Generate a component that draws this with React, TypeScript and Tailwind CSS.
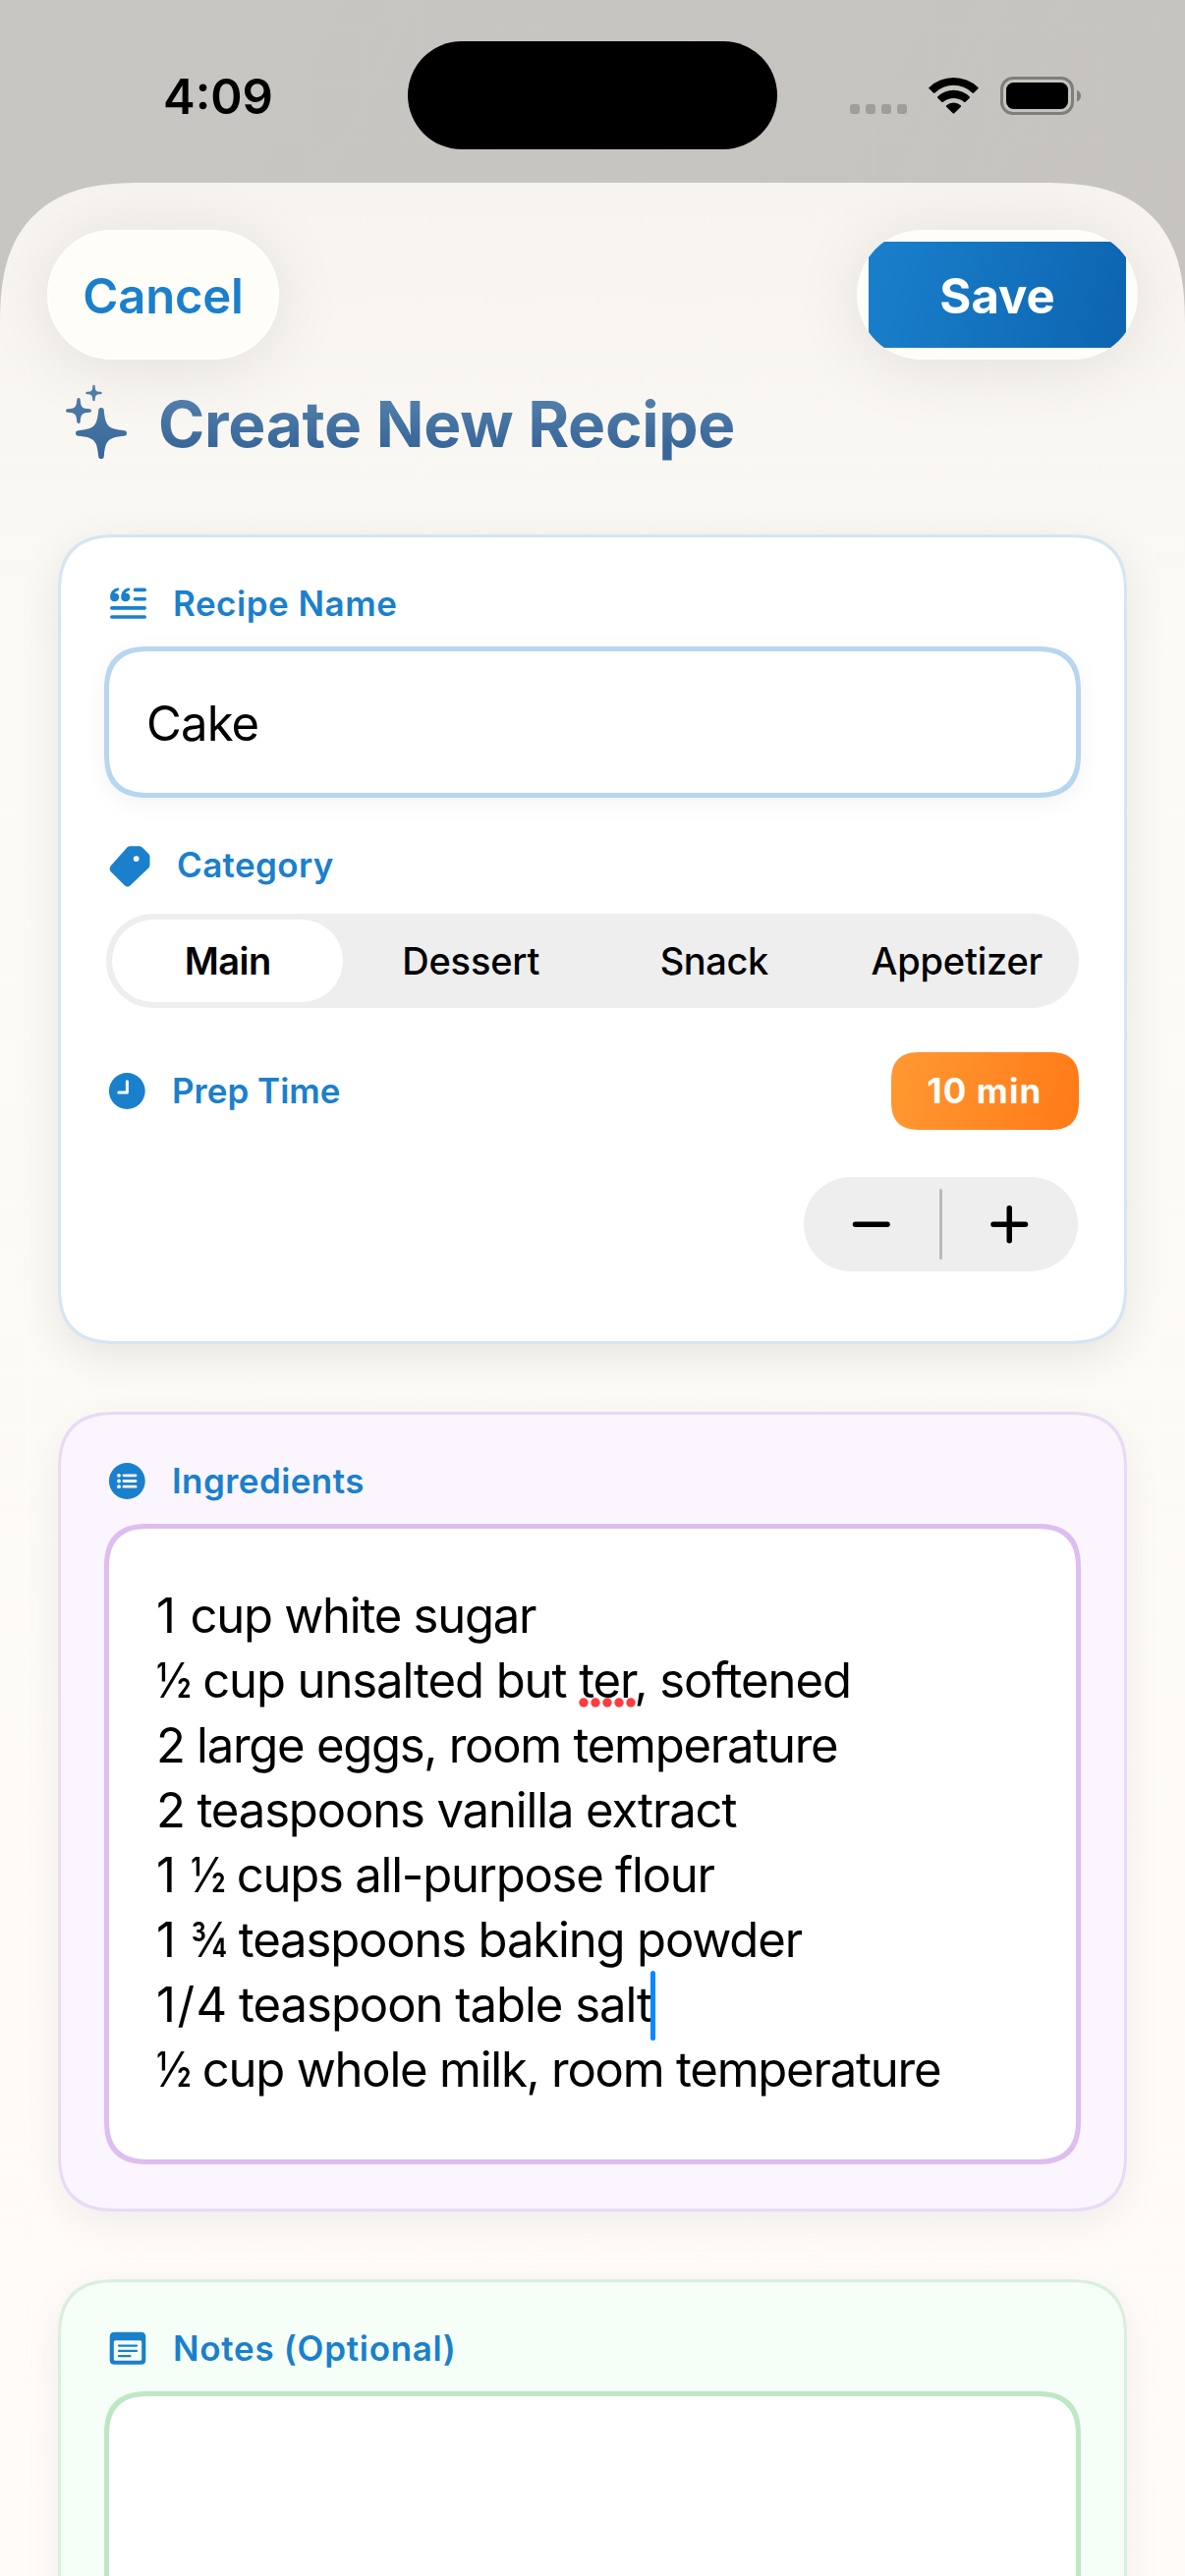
import type { ReactNode } from "react";

/* Four-pointed star with rounded tips */
function starPath(cx: number, cy: number, r: number, t: number) {
  const a = r * 0.17;
  const b = r * 0.27;
  const e = r - t;
  return [
    `M${cx - t} ${cy - e}`,
    `A${t} ${t} 0 0 1 ${cx + t} ${cy - e}`,
    `C${cx + a} ${cy - b} ${cx + b} ${cy - a} ${cx + e} ${cy - t}`,
    `A${t} ${t} 0 0 1 ${cx + e} ${cy + t}`,
    `C${cx + b} ${cy + a} ${cx + a} ${cy + b} ${cx + t} ${cy + e}`,
    `A${t} ${t} 0 0 1 ${cx - t} ${cy + e}`,
    `C${cx - a} ${cy + b} ${cx - b} ${cy + a} ${cx - e} ${cy + t}`,
    `A${t} ${t} 0 0 1 ${cx - e} ${cy - t}`,
    `C${cx - b} ${cy - a} ${cx - a} ${cy - b} ${cx - t} ${cy - e}Z`,
  ].join("");
}

function SparklesIcon() {
  return (
    <svg width="90" height="90" viewBox="0 0 90 90" className="shrink-0">
      <defs>
        <linearGradient id="sparkle" x1="0" y1="7" x2="0" y2="82" gradientUnits="userSpaceOnUse">
          <stop offset="0" stopColor="#5380aa" />
          <stop offset="1" stopColor="#376699" />
        </linearGradient>
      </defs>
      <g fill="url(#sparkle)">
        <path d={starPath(43, 56, 26, 2.8)} />
        <path d={starPath(20, 33, 13, 1.7)} />
        <path d={starPath(35.5, 15, 8.2, 1.2)} />
      </g>
    </svg>
  );
}

function QuoteIcon() {
  return (
    <svg width="52" height="43" viewBox="0 0 52 43" className="shrink-0" fill="#1a80cc">
      <path d="M4.1 15c0-5.200 3-8.900 7.700-9.500 1.700-.2 2.200 1.900.6 2.400-2.300.8-3.700 1.900-4.100 3 3.300-.4 5 1.600 5 3.900 0 2.600-2 4.500-4.600 4.500-2.700 0-4.600-1.800-4.600-4.300z" />
      <path d="M15.200 15c0-5.200 3-8.900 7.700-9.500 1.700-.2 2.200 1.900.6 2.400-2.300.8-3.700 1.900-4.100 3 3.300-.4 5 1.600 5 3.900 0 2.600-2 4.500-4.600 4.500-2.700 0-4.600-1.800-4.600-4.300z" />
      <rect x="27.700" y="5.600" width="13.300" height="3.600" rx="1.800" />
      <rect x="27.700" y="14.900" width="13.300" height="3.600" rx="1.800" />
      <rect x="4" y="24.100" width="37" height="3.600" rx="1.800" />
      <rect x="4" y="33.200" width="37" height="3.600" rx="1.800" />
    </svg>
  );
}

function TagIcon() {
  return (
    <svg width="52" height="48" viewBox="0 0 52 48" className="shrink-0" fill="#1a80cc">
      <path
        fillRule="evenodd"
        d="M21.400 4.400Q22.800 3.300 24.600 3.300H33.600Q35.400 3.300 36.700 4.600L43.200 11.100Q44.500 12.400 44.500 14.200V22.300Q44.500 24.100 43.200 25.500L24.600 43.200Q21.700 45.600 18.900 43.200L4.800 29.200Q2.400 26.500 4.800 23.200ZM30.700 13.200a2.900 2.900 0 1 0 0 5.800 2.900 2.900 0 0 0 0-5.800Z"
      />
    </svg>
  );
}

function ClockIcon() {
  return (
    <svg width="52" height="43" viewBox="0 0 52 43" className="shrink-0">
      <circle cx="21.300" cy="21.500" r="18.400" fill="#1a80cc" />
      <path d="M21.400 11.700V22.900H12.800" fill="none" stroke="#fff" strokeWidth="3" strokeLinecap="round" strokeLinejoin="round" />
    </svg>
  );
}

function ListIcon() {
  return (
    <svg width="52" height="43" viewBox="0 0 52 43" className="shrink-0">
      <circle cx="21.300" cy="21.500" r="18.400" fill="#1a80cc" />
      <g fill="#faf5ff">
        {[15.8, 21.5, 27.2].map((y) => (
          <g key={y}>
            <circle cx="13" cy={y} r="1.900" />
            <rect x="16.600" y={y - 1.4} width="14.800" height="2.800" rx="1.400" />
          </g>
        ))}
      </g>
    </svg>
  );
}

function NoteIcon() {
  return (
    <svg width="52" height="43" viewBox="0 0 52 43" className="shrink-0">
      <path
        fill="#1a80cc"
        fillRule="evenodd"
        d="M8.600 4.700H35.400Q40.300 4.700 40.300 9.600V32.900Q40.300 37.800 35.400 37.800H8.600Q3.700 37.800 3.700 32.900V9.600Q3.700 4.700 8.600 4.700ZM9.400 13.300Q7.800 13.300 7.800 14.900V32.200Q7.800 33.800 9.400 33.800H34.600Q36.200 33.800 36.200 32.200V14.900Q36.200 13.300 34.600 13.300Z"
      />
      <path d="M13 18.600H31M13 23.900H31M13 29.100H24.500" stroke="#1a80cc" strokeWidth="2.300" strokeLinecap="round" />
    </svg>
  );
}

function StatusBar() {
  return (
    <div className="flex h-[186px] items-start">
      <div className="w-[415px] pt-[69px] pl-[166px] text-[49px] leading-[60px] font-semibold text-black">4:09</div>
      <div className="mt-[42px] h-[110px] w-[376px] rounded-full bg-black" />
      <div className="mt-[78px] flex h-[39px] items-end pl-[74px]">
        <div className="mb-px flex gap-[6px]">
          {[0, 1, 2, 3].map((i) => (
            <span key={i} className="h-[10px] w-[10px] rounded-[3px] bg-[#9f9e9a]" />
          ))}
        </div>
        <svg width="51" height="38" viewBox="0 0 51 38" className="mb-px ml-[22px]" fill="#000">
          <path d="M.6 10.900Q-.3 11.300.6 12.300L4.900 16.500Q5.600 17.200 6.500 16.400A27.500 27.500 0 0 1 44.500 16.400Q45.400 17.200 46.100 16.500L50.400 12.300Q51 11.500 50.400 10.900A36 36 0 0 0 .6 10.900Z" />
          <path d="M9.200 20.400Q8.600 21.100 9.200 21.700L13.400 25.700Q14.200 26.400 15 25.700A17 17 0 0 1 36 25.700Q36.800 26.400 37.600 25.700L41.800 21.700Q42.400 21.100 41.800 20.400A23 23 0 0 0 9.200 20.400Z" />
          <path d="M18.200 29.200Q17.500 30 18.200 30.700L24.700 37.200Q25.500 38 26.300 37.200L32.800 30.700Q33.500 30 32.800 29.200A11 11 0 0 0 18.200 29.200Z" />
        </svg>
        <svg width="83" height="39" viewBox="0 0 83 39" className="ml-[22px]">
          <rect x="1.500" y="1.500" width="72" height="36" rx="11.500" fill="none" stroke="#7f7e7b" strokeWidth="3" />
          <rect x="6" y="6" width="63" height="27" rx="7.500" fill="#000" />
          <path d="M78 13.500Q82 15.500 82 19.500T78 25.500Z" fill="#7f7e7b" />
        </svg>
      </div>
    </div>
  );
}

function NavButtons() {
  return (
    <div className="flex justify-between px-12 pt-12">
      <button className="h-[132px] w-[236px] rounded-full border-2 border-white bg-[#fffdf8] pt-[3px] text-[49px] leading-[60px] font-[560] tracking-[-0.2px] text-[#1a80cc] shadow-[0_8px_72px_rgba(0,0,0,0.09)]">
        Cancel
      </button>
      <button className="flex h-[132px] w-[286px] items-center justify-center overflow-hidden rounded-full bg-[#fffdf8] shadow-[0_8px_72px_rgba(0,0,0,0.09)]">
        <span className="flex h-[108px] w-[262px] items-center justify-center bg-linear-[105deg] from-[#1a80cc] to-[#0d64b0] pt-[3px] text-[49px] leading-[60px] font-[660] text-white">
          Save
        </span>
      </button>
    </div>
  );
}

function Label({ icon, children, className }: { icon: ReactNode; children: ReactNode; className: string }) {
  return (
    <div className="flex items-center">
      {icon}
      <span className={`text-[35px] leading-[43px] font-semibold text-[#1a80cc] ${className}`}>{children}</span>
    </div>
  );
}

const card =
  "mx-[59px] rounded-[60px] [corner-shape:superellipse(1.38)] border-[3px] px-[46px] pt-[46px]";
const field = "mx-[-2px] border-[5px] bg-white rounded-[46px] [corner-shape:superellipse(1.38)]";

const categories = [
  { name: "Main", style: "font-semibold tracking-[-0.5px] bg-white" },
  { name: "Dessert", style: "font-medium tracking-[-0.15px]" },
  { name: "Snack", style: "font-medium tracking-[-0.4px]" },
  { name: "Appetizer", style: "font-medium tracking-[-0.2px] pr-px" },
];

function DetailsCard() {
  return (
    <section className={`${card} h-[824px] border-[#d5e5f2] bg-white shadow-[0_12px_44px_rgba(0,0,0,0.09)]`}>
      <Label icon={<QuoteIcon />} className="ml-[16px] tracking-[0.5px]">Recipe Name</Label>
      <div className={`${field} mt-[22px] flex h-[154px] items-center border-[#b7d6ef] pl-[38px] shadow-[0_6px_24px_rgba(0,0,0,0.05)]`}>
        <span className="mt-[3px] text-[49px] leading-[60px] tracking-[-0.83px]">Cake</span>
      </div>

      <div className="mt-[46px] h-12">
        <Label icon={<TagIcon />} className="-mt-[3px] ml-[20px] tracking-[0.35px]">Category</Label>
      </div>
      <div className="mt-6 flex h-24 items-center rounded-full bg-[#eeeeee]">
        {categories.map((c) => (
          <div key={c.name} className="flex flex-1 justify-center">
            <span className={`flex h-[84px] w-[235px] items-center justify-center rounded-full text-[38px] leading-[46px] ${c.style}`}>
              {c.name}
            </span>
          </div>
        ))}
      </div>

      <div className="mt-[45px] flex h-[79px] items-center justify-between">
        <Label icon={<ClockIcon />} className="ml-[15px]">Prep Time</Label>
        <span className="flex h-[79px] w-[191px] items-center justify-center rounded-[30px] bg-linear-[105deg] from-[#ff9933] to-[#ff7a17] pr-px text-[35px] leading-[43px] font-bold tracking-[1.1px] text-white [corner-shape:superellipse(1.38)]">
          10 min
        </span>
      </div>
      <div className="mt-12 flex justify-end">
        <div className="mr-px flex h-24 w-[279px] items-center rounded-full bg-[#eeeeee]">
          <button className="flex flex-1 justify-center" aria-label="Decrease">
            <svg width="42" height="42" viewBox="0 0 42 42" stroke="#000" strokeWidth="5.500" strokeLinecap="round">
              <path d="M4.500 21.200H37" />
            </svg>
          </button>
          <span className="h-[72px] w-[3px] rounded-full bg-[#bababa]" />
          <button className="flex flex-1 justify-center" aria-label="Increase">
            <svg width="42" height="42" viewBox="0 0 42 42" stroke="#000" strokeWidth="5.500" strokeLinecap="round">
              <path d="M4 21.200H36.500M20.250 4.700V37.700" />
            </svg>
          </button>
        </div>
      </div>
    </section>
  );
}

function SpellingDots() {
  return (
    <svg width="58" height="10" viewBox="0 0 58 10" className="absolute top-[47px] left-0" fill="#ff3b3f">
      {[5, 17, 29, 41, 53].map((x) => (
        <circle key={x} cx={x} cy="5" r="4.700" />
      ))}
    </svg>
  );
}

/* Vulgar fraction, set slightly condensed */
function Fraction({ children }: { children: string }) {
  return <span className="mr-[-6px] inline-block origin-left scale-x-[0.87]">{children}</span>;
}

function IngredientsCard() {
  return (
    <section className={`${card} mt-[69px] h-[814px] border-[#e9daf5] bg-[#faf5ff] shadow-[0_12px_40px_rgba(0,0,0,0.055)]`}>
      <Label icon={<ListIcon />} className="ml-[15px] tracking-[0.42px]">Ingredients</Label>
      <div className={`${field} mt-[22px] h-[652px] border-[#debdf0] pt-[56px] pl-[48px] text-[49px] leading-[66px] whitespace-nowrap`}>
        <p className="tracking-[-1.25px]">
          <span className="tracking-[2px]">1</span> cup white sugar
        </p>
        <p className="tracking-[-1.08px]">
          <Fraction>½</Fraction> cup unsalted but{" "}
          <span className="relative">
            <SpellingDots />
            <span className="relative">ter</span>
          </span>
          , softened
        </p>
        <p className="tracking-[-1.27px]">2 large eggs, room temperature</p>
        <p className="tracking-[-1.13px]">2 teaspoons vanilla extract</p>
        <p className="tracking-[-1.23px]">
          <span className="tracking-[2.5px]">1</span> <Fraction>½</Fraction> cups all-purpose flour
        </p>
        <p className="tracking-[-1.15px]">
          <span className="tracking-[2.5px]">1</span> <Fraction>¾</Fraction> teaspoons baking powder
        </p>
        <p className="tracking-[-1.02px]">
          <span className="relative">
            <span className="tracking-[1.5px]">1/</span>4 teaspoon table salt
            <span className="absolute top-[-5px] right-[-4px] h-[71px] w-[5px] rounded-full bg-[#0a88ff]" />
          </span>
        </p>
        <p className="tracking-[-1.23px]">
          <Fraction>½</Fraction> cup whole milk, room temperature
        </p>
      </div>
    </section>
  );
}

function NotesCard() {
  return (
    <section className={`${card} mt-[69px] h-[814px] shrink-0 border-[#d9efdc] bg-[#f5fff7] shadow-[0_12px_40px_rgba(0,0,0,0.055)]`}>
      <Label icon={<NoteIcon />} className="ml-[16px] tracking-[0.7px]">Notes (Optional)</Label>
      <div className={`${field} mt-[22px] h-[652px] border-[#bde8c5]`} />
    </section>
  );
}

export default function App() {
  return (
    <div className="h-[2622px] w-[1206px] overflow-hidden bg-linear-to-br from-[#c8c6c2] to-[#c5c2be] font-[Inter,sans-serif] text-black">
      <StatusBar />
      <main className="h-[2436px] overflow-hidden rounded-t-[145px] bg-linear-to-b from-[#f7f4ef] from-0% via-[#fcfaf5] via-20% to-[#fefbf8] to-100% [corner-shape:superellipse(1.38)]">
        <NavButtons />
        <div className="mt-[19px] mb-[69px] flex h-[90px] items-center pl-[60px]">
          <SparklesIcon />
          <h1 className="mt-[4px] ml-[11px] bg-linear-to-b from-[#5380aa] from-15% to-[#376699] to-80% bg-clip-text text-[64px] leading-[80px] font-[660] tracking-[-0.3px] text-transparent">
            Create New Recipe
          </h1>
        </div>
        <DetailsCard />
        <IngredientsCard />
        <NotesCard />
      </main>
    </div>
  );
}
